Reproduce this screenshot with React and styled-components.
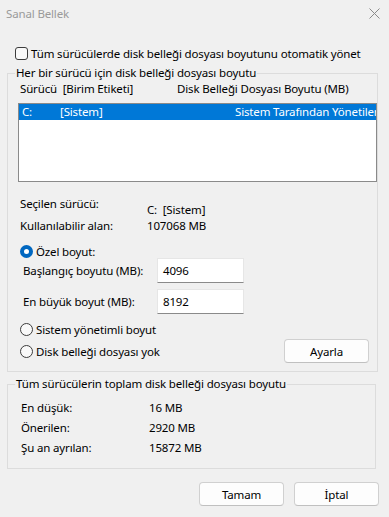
import React from 'react';
import styled, { createGlobalStyle } from 'styled-components';

const GlobalStyle = createGlobalStyle`
  html, body {
    margin: 0;
    padding: 0;
    background: #f0f0f0;
  }
  body {
    font-family: "Noto Sans", "Liberation Sans", sans-serif;
    font-size: 11.5px;
    letter-spacing: -0.15px;
    color: #000;
  }
`;

const Window = styled.div`
  width: 389px;
  height: 517px;
  background: #f0f0f0;
  overflow: hidden;
  white-space: nowrap;
`;

const TitleBar = styled.div`
  height: 26px;
  display: flex;
  align-items: center;
  justify-content: space-between;
  padding: 0 9px 0 6px;
  color: #9a9a9a;
`;

const Body = styled.div`
  padding: 0 12px 0 7px;
`;

const CheckRow = styled.label`
  display: flex;
  align-items: center;
  gap: 3px;
  height: 13px;
  margin: 21px 0 0 8px;
  line-height: 13px;
`;

const CheckBox = styled.span`
  width: 13px;
  height: 13px;
  box-sizing: border-box;
  border: 1px solid #3c3c3c;
  border-radius: 3px;
  background: #f9f9f9;
  flex: none;
`;

const Group = styled.fieldset`
  margin: ${p => p.$top}px 0 0 0;
  padding: 0;
  border: 1px solid #dcdcdc;
  width: ${p => p.$width}px;
  box-sizing: border-box;
`;

const Legend = styled.legend`
  margin-left: 7px;
  padding: 0 1px;
  line-height: 16px;
`;

const Headers = styled.div`
  display: grid;
  grid-template-columns: 157px 1fr;
  padding-left: 12px;
  line-height: 16px;
`;

const ListBox = styled.div`
  margin: 6px 0 0 10px;
  width: 359px;
  height: 79px;
  box-sizing: border-box;
  border: 1px solid #8a8a8a;
  background: #fff;
  overflow: hidden;
`;

const ListRow = styled.div`
  display: grid;
  grid-template-columns: 38px 175px 1fr;
  height: 16px;
  line-height: 16px;
  padding-left: 3px;
  background: ${p => (p.$selected ? '#0078d7' : 'transparent')};
  color: ${p => (p.$selected ? '#fff' : '#000')};
`;

const InfoGrid = styled.div`
  display: grid;
  grid-template-columns: 127px 1fr;
  padding-left: 12px;
  margin-top: ${p => p.$top || 0}px;
  line-height: 16px;
`;

const Value = styled.span`
  padding-top: ${p => p.$shift || 0}px;
`;

const RadioRow = styled.label`
  display: flex;
  align-items: center;
  gap: 3px;
  height: 16px;
  margin: ${p => p.$top}px 0 0 12px;
`;

const Radio = styled.span`
  width: 13px;
  height: 13px;
  box-sizing: border-box;
  border-radius: 50%;
  flex: none;
  border: ${p => (p.$checked ? '4px solid #0067c0' : '1px solid #3c3c3c')};
  background: ${p => (p.$checked ? '#fff' : '#f9f9f9')};
`;

const FieldRow = styled.div`
  display: grid;
  grid-template-columns: 134px 87px;
  align-items: center;
  padding-left: 15px;
  margin-top: ${p => p.$top}px;
`;

const TextInput = styled.div`
  height: 25px;
  box-sizing: border-box;
  background: #fff;
  border: 1px solid #e6e6e6;
  border-bottom-color: #8a8a8a;
  padding-left: 5px;
  line-height: 23px;
`;

const SplitRow = styled.div`
  display: flex;
  align-items: center;
  justify-content: space-between;
  margin-top: 2px;
  padding: 0 8px 8px 0;
`;

const Button = styled.div`
  width: 85px;
  height: 24px;
  box-sizing: border-box;
  border: 1px solid #d0d0d0;
  border-bottom-color: #c0c0c0;
  border-radius: 4px;
  background: #fdfdfd;
  display: flex;
  align-items: center;
  justify-content: center;
`;

const SumRows = styled.div`
  display: grid;
  grid-template-columns: 128px 1fr;
  grid-auto-rows: 20px;
  align-items: center;
  padding: 5px 0 11px 13px;
`;

const Footer = styled.div`
  display: flex;
  justify-content: flex-end;
  gap: 10px;
  margin: 13px -2px 0 0;
`;

const CloseIcon = () => (
  <svg width="11" height="11" viewBox="0 0 11 11">
    <path d="M0.5 0.5 L10.5 10.5 M10.5 0.5 L0.5 10.5" stroke="#8a8a8a" strokeWidth="1" fill="none" />
  </svg>
);

export default function App() {
  return (
    <Window>
      <GlobalStyle />
      <TitleBar>
        <span>Sanal Bellek</span>
        <CloseIcon />
      </TitleBar>
      <Body>
        <CheckRow>
          <CheckBox />
          Tüm sürücülerde disk belleği dosyası boyutunu otomatik yönet
        </CheckRow>

        <Group $top={5} $width={370}>
          <Legend>Her bir sürücü için disk belleği dosyası boyutu</Legend>
          <Headers>
            <span>Sürücü&nbsp; [Birim Etiketi]</span>
            <span>Disk Belleği Dosyası Boyutu (MB)</span>
          </Headers>
          <ListBox>
            <ListRow $selected>
              <span>C:</span>
              <span>[Sistem]</span>
              <span>Sistem Tarafından Yönetilen</span>
            </ListRow>
          </ListBox>

          <InfoGrid $top={14}>
            <span>Seçilen sürücü:</span>
            <Value $shift={6}>C:&nbsp; [Sistem]</Value>
            <span>Kullanılabilir alan:</span>
            <Value>107068 MB</Value>
          </InfoGrid>

          <RadioRow $top={9}>
            <Radio $checked />
            Özel boyut:
          </RadioRow>
          <FieldRow $top={-1}>
            <span>Başlangıç boyutu (MB):</span>
            <TextInput>4096</TextInput>
          </FieldRow>
          <FieldRow $top={6}>
            <span>En büyük boyut (MB):</span>
            <TextInput>8192</TextInput>
          </FieldRow>

          <RadioRow $top={7}>
            <Radio />
            Sistem yönetimli boyut
          </RadioRow>
          <SplitRow>
            <RadioRow $top={0}>
              <Radio />
              Disk belleği dosyası yok
            </RadioRow>
            <Button>Ayarla</Button>
          </SplitRow>
        </Group>

        <Group $top={4} $width={369}>
          <Legend>Tüm sürücülerin toplam disk belleği dosyası boyutu</Legend>
          <SumRows>
            <span>En düşük:</span>
            <span>16 MB</span>
            <span>Önerilen:</span>
            <span>2920 MB</span>
            <span>Şu an ayrılan:</span>
            <span>15872 MB</span>
          </SumRows>
        </Group>

        <Footer>
          <Button>Tamam</Button>
          <Button>İptal</Button>
        </Footer>
      </Body>
    </Window>
  );
}
